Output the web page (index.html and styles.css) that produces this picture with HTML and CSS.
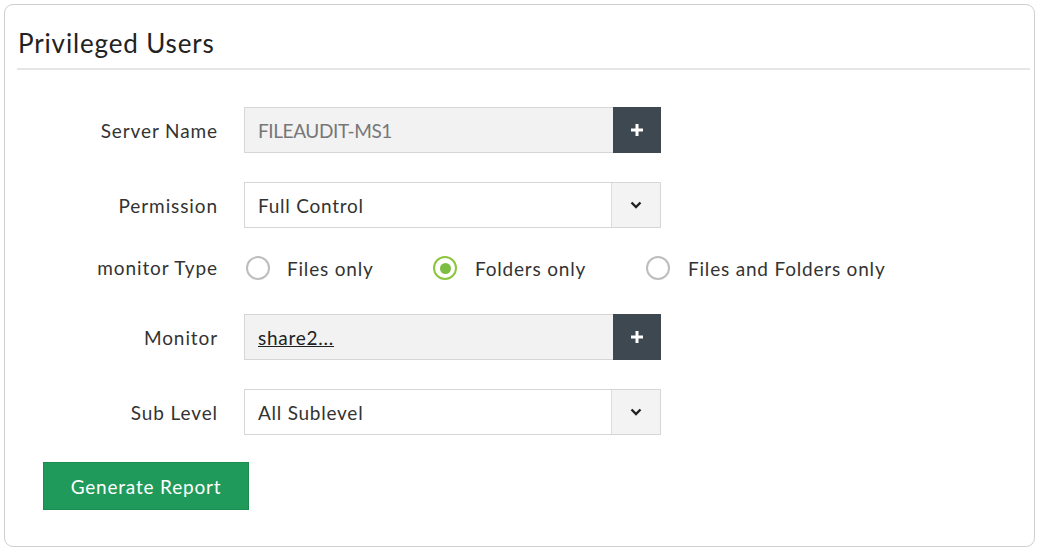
FILE: index.html
```html
<!DOCTYPE html>
<html>
<head>
<meta charset="utf-8">
<link rel="stylesheet" href="styles.css">
</head>
<body>
<div class="card">
  <h1 class="title">Privileged Users</h1>
  <div class="form">
    <div class="row row-input">
      <label class="label">Server Name</label>
      <div class="field field-gray">
        <span class="value muted">FILEAUDIT-MS1</span>
        <button class="btn-add" type="button">
          <svg width="16" height="16" viewBox="0 0 16 16"><path d="M8 2v12M2 8h12" stroke="#fff" stroke-width="3" fill="none"/></svg>
        </button>
      </div>
    </div>
    <div class="row row-input">
      <label class="label">Permission</label>
      <div class="field">
        <span class="value">Full Control</span>
        <span class="btn-drop">
          <svg width="12" height="8" viewBox="0 0 12 8"><path d="M1.5 1.5L6 6l4.5-4.5" stroke="#222" stroke-width="2.4" fill="none"/></svg>
        </span>
      </div>
    </div>
    <div class="row row-radio">
      <label class="label">monitor Type</label>
      <div class="radios">
        <span class="radio"><span class="dot"></span>Files only</span>
        <span class="radio checked"><span class="dot"></span>Folders only</span>
        <span class="radio"><span class="dot"></span>Files and Folders only</span>
      </div>
    </div>
    <div class="row row-input">
      <label class="label">Monitor</label>
      <div class="field field-gray">
        <span class="value link">share2...</span>
        <button class="btn-add" type="button">
          <svg width="16" height="16" viewBox="0 0 16 16"><path d="M8 2v12M2 8h12" stroke="#fff" stroke-width="3" fill="none"/></svg>
        </button>
      </div>
    </div>
    <div class="row row-input">
      <label class="label">Sub Level</label>
      <div class="field">
        <span class="value">All Sublevel</span>
        <span class="btn-drop">
          <svg width="12" height="8" viewBox="0 0 12 8"><path d="M1.5 1.5L6 6l4.5-4.5" stroke="#222" stroke-width="2.4" fill="none"/></svg>
        </span>
      </div>
    </div>
  </div>
  <button class="btn-generate" type="button">Generate Report</button>
</div>
</body>
</html>
```
FILE: styles.css
```css
html, body {
  margin: 0;
  padding: 0;
  background: #fff;
}
body {
  font-family: Lato, "Open Sans", sans-serif;
  color: #333;
  padding: 4px;
  box-sizing: border-box;
  width: 1038px;
  height: 552px;
}
.card {
  box-sizing: border-box;
  width: 1031px;
  height: 543px;
  border: 1px solid #cfcfcf;
  border-radius: 9px;
  padding: 0 4px 0 12px;
}
.title {
  margin: 0;
  padding: 23px 0 10px 1px;
  font-size: 26px;
  font-weight: 400;
  letter-spacing: 0.85px;
  line-height: 30px;
  color: #222;
  border-bottom: 2px solid #e6e6e6;
}
.form {
  display: flex;
  flex-direction: column;
  padding-top: 37px;
}
.row {
  display: grid;
  grid-template-columns: 200px 417px;
  column-gap: 27px;
  align-items: center;
}
.row-input {
  height: 46px;
  margin-bottom: 29px;
}
.row-radio {
  height: 28px;
  margin-top: -3px;
  margin-bottom: 32px;
}
.label {
  text-align: right;
  font-size: 19px;
  letter-spacing: 0.9px;
  margin-right: -1px;
  color: #333;
}
.row-radio .label {
  margin-top: -2px;
}
.field {
  display: flex;
  height: 46px;
  box-sizing: border-box;
  border: 1px solid #d6d6d6;
  background: #fff;
  align-items: stretch;
}
.field-gray {
  background: #f2f2f2;
}
.value {
  flex: 1;
  display: flex;
  align-items: center;
  padding-left: 13px;
  font-size: 19px;
  letter-spacing: 0.75px;
  color: #333;
}
.value.muted {
  color: #777;
  letter-spacing: -0.4px;
}
.value.link {
  text-decoration: underline;
  color: #222;
}
.btn-add {
  width: 48px;
  margin: -1px -1px -1px 0;
  border: none;
  background: #3d4850;
  display: flex;
  align-items: center;
  justify-content: center;
  padding: 0;
}
.btn-drop {
  width: 48px;
  border-left: 1px solid #dcdcdc;
  background: #f3f3f3;
  display: flex;
  align-items: center;
  justify-content: center;
}
.radios {
  display: flex;
  align-items: center;
  width: 700px;
}
.radio {
  display: flex;
  align-items: center;
  font-size: 19px;
  letter-spacing: 0.8px;
  color: #333;
}
.radio:nth-child(1) {
  width: 187px;
}
.radio:nth-child(2) {
  width: 213px;
}
.dot {
  box-sizing: border-box;
  width: 24px;
  height: 24px;
  border: 2px solid #bdbdbd;
  border-radius: 50%;
  margin-left: 2px;
  margin-right: 17px;
  display: flex;
  align-items: center;
  justify-content: center;
}
.radio:nth-child(n+2) .dot {
  margin-right: 18px;
}
.radio.checked .dot {
  border-color: #8cc63f;
}
.radio.checked .dot::after {
  content: "";
  width: 11px;
  height: 11px;
  border-radius: 50%;
  background: #7cbd42;
}
.btn-generate {
  margin-left: 26px;
  margin-top: -2px;
  width: 206px;
  height: 48px;
  border: 1px solid #1a8a50;
  background: #1f9a5b;
  color: #fff;
  font-family: Lato, "Open Sans", sans-serif;
  font-size: 19px;
  letter-spacing: 0.8px;
  padding: 0;
}
```
